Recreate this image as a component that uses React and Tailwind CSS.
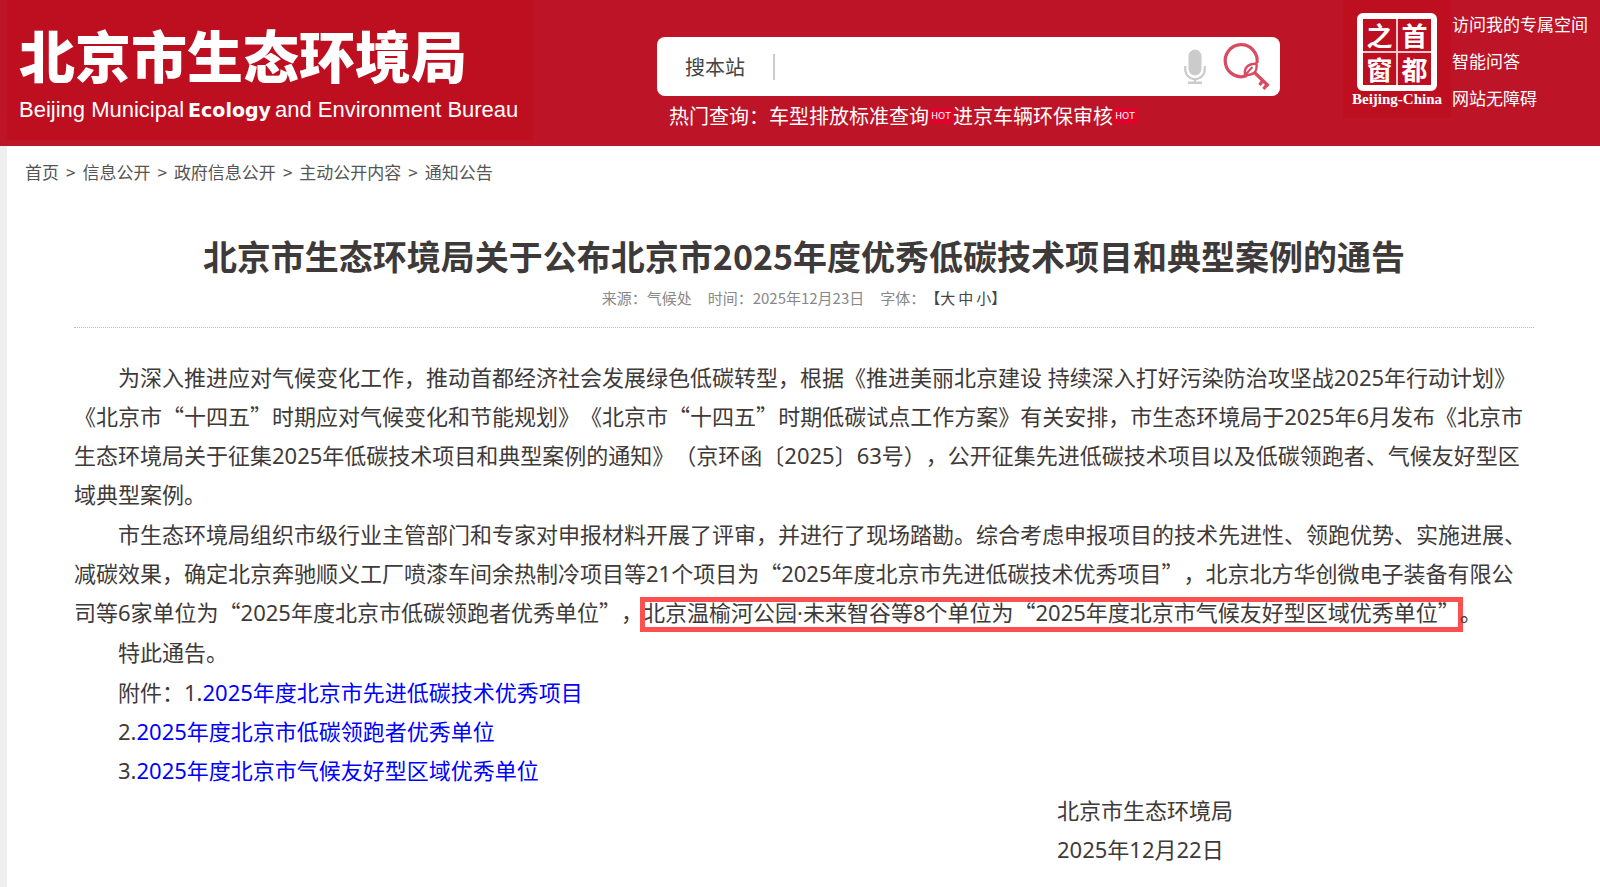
const crumbs = ["首页", "信息公开", "政府信息公开", "主动公开内容", "通知公告"];

function MicIcon() {
  return (
    <svg viewBox="0 0 22 36" className="h-9 w-[22px]" aria-hidden="true">
      <rect x="4.500" y="0.500" width="13" height="26" rx="6.500" fill="#cbcbcb" />
      <path d="M1.200 17v3c0 5.800 4.300 10 9.800 10s9.800-4.200 9.800-10v-3" fill="none" stroke="#cbcbcb" strokeWidth="2.200" />
      <path d="M11 30v3.500M4 33.800h14" stroke="#cbcbcb" strokeWidth="2.400" />
    </svg>
  );
}

function KeyIcon() {
  return (
    <svg viewBox="0 0 48 50" className="h-[50px] w-12" aria-hidden="true" fill="none" stroke="#d94b62">
      <path d="M25 33.600A16 16 0 1 1 35 21" strokeWidth="3.200" />
      <path d="M23 33c-1-7 2-11 11.500-11.500C35.500 30 31.500 33.500 23 33z" strokeWidth="2.400" />
      <path d="M24 32l6.500-7" strokeWidth="2" />
      <path d="M32.500 30.500l14 13.500" strokeWidth="3.200" />
      <path d="M41 38.500l-3.500 4.500M45.500 42l-4 5" strokeWidth="3.200" />
    </svg>
  );
}

function Hot() {
  return (
    <span className="flex h-4 w-6 items-center justify-center bg-[#e0022a] font-['DejaVu_Sans',sans-serif] text-[9px] leading-4 text-white">
      HOT
    </span>
  );
}

function SealGlyph({ children }) {
  return <span className="flex items-center justify-center leading-[26px]">{children}</span>;
}

function Seal() {
  return (
    <a href="#capital" className="flex w-[108px] shrink-0 flex-col items-center bg-[#be0f20] pt-[13px] pb-[11px] text-white">
      <span className="grid h-[78px] w-20 grid-cols-2 grid-rows-2 gap-[2px] rounded-md border-[6px] border-white bg-[linear-gradient(#f3c9cd,#f3c9cd),linear-gradient(#f3c9cd,#f3c9cd)] bg-[length:2px_100%,100%_2px] bg-center bg-no-repeat font-['Noto_Sans_CJK_SC',sans-serif] text-[26px] font-bold">
        <SealGlyph>之</SealGlyph>
        <SealGlyph>首</SealGlyph>
        <SealGlyph>窗</SealGlyph>
        <SealGlyph>都</SealGlyph>
      </span>
      <span className="mt-px font-['Liberation_Serif',serif] text-[15px] leading-[15px] font-bold">Beijing-China</span>
    </a>
  );
}

function Header() {
  return (
    <header className="flex h-[146px] items-start bg-[#be1428] pl-[7px] text-white">
      <a href="#home" className="flex h-[140px] w-[526px] shrink-0 flex-col bg-[#be0f20] pl-3">
        <span className="mt-[18px] text-[56px] leading-[72px] font-black whitespace-nowrap">北京市生态环境局</span>
        <span className="mt-[6px] flex items-baseline gap-1 font-['Liberation_Sans',sans-serif] text-[22px] leading-7 whitespace-nowrap">
          <span>Beijing Municipal</span>
          <b className="font-['DejaVu_Sans',sans-serif] text-[19px]">Ecology</b>
          <span>and Environment Bureau</span>
        </span>
      </a>
      <div className="ml-[124px] w-[623px] pt-[37px]">
        <form className="flex h-[59px] items-center rounded-lg bg-white pr-[10px] pl-7" onSubmit={(e) => e.preventDefault()}>
          <label htmlFor="q" className="shrink-0 pr-7 text-[20px] text-[#444]">搜本站</label>
          <input id="q" className="h-[26px] min-w-0 flex-1 border-l-2 border-[#ccc] pl-3 text-[18px] text-[#444] outline-none" />
          <button type="button" aria-label="语音输入"><MicIcon /></button>
          <button type="submit" aria-label="搜索" className="ml-4"><KeyIcon /></button>
        </form>
        <p className="flex items-center pl-3 text-[20px] leading-10 whitespace-nowrap">
          <span>热门查询：</span>
          <a href="#emission">车型排放标准查询</a>
          <Hot />
          <a href="#audit">进京车辆环保审核</a>
          <Hot />
        </p>
      </div>
      <div className="ml-auto flex">
        <Seal />
        <nav className="flex w-[149px] flex-col gap-[11px] pt-[11px] pl-px text-[17px] leading-[26px] whitespace-nowrap">
          <a href="#space">访问我的专属空间</a>
          <a href="#ask">智能问答</a>
          <a href="#access">网站无障碍</a>
        </nav>
      </div>
    </header>
  );
}

// Quotation marks take the full-width CJK form while digits use the Latin face.
function Zh({ children }) {
  return children.split(/([“”])/).map((part, i) =>
    i % 2 ? <span key={i} className="font-['Noto_Sans_CJK_SC',sans-serif] leading-none">{part}</span> : part
  );
}

export default function App() {
  return (
    <div lang="zh-CN" className="min-h-screen bg-white font-['Noto_Sans_CJK_SC',sans-serif] [text-spacing-trim:space-all]">
      <Header />
      <div className="min-h-[741px] border-l-[7px] border-[#efefef]">
        <nav className="flex gap-[7px] pt-3 pl-[18px] text-[17px] leading-7 text-[#555]">
          {crumbs.map((c, i) => (
            <span key={c} className="flex gap-[7px]">
              {i > 0 && <span>&gt;</span>}
              <a href="#crumb">{c}</a>
            </span>
          ))}
        </nav>
        <main className="mr-[66px] ml-[67px] text-[#3e3a39]">
          <h1 className="mt-[43px] text-center text-[34px] leading-[53px] font-bold">
            北京市生态环境局关于公布北京市2025年度优秀低碳技术项目和典型案例的通告
          </h1>
          <div className="flex justify-center gap-4 border-b border-dotted border-[#bbb] pt-1 pb-[17px] text-[15px] leading-6 text-[#888]">
            <span>来源：气候处</span>
            <span>时间：2025年12月23日</span>
            <span className="flex">
              字体：
              <span className="flex gap-[3px] text-[#444]">
                <button type="button">【大</button>
                <button type="button">中</button>
                <button type="button">小】</button>
              </span>
            </span>
          </div>
          <article className="space-y-px pt-[30px] font-['Noto_Sans','Noto_Sans_CJK_SC',sans-serif] text-[22px] leading-[39px]">
            <p className="indent-11">
              <Zh>为深入推进应对气候变化工作，推动首都经济社会发展绿色低碳转型，根据《推进美丽北京建设 持续深入打好污染防治攻坚战2025年行动计划》《北京市“十四五”时期应对气候变化和节能规划》《北京市“十四五”时期低碳试点工作方案》有关安排，市生态环境局于2025年6月发布《北京市生态环境局关于征集2025年低碳技术项目和典型案例的通知》（京环函〔2025〕63号），公开征集先进低碳技术项目以及低碳领跑者、气候友好型区域典型案例。</Zh>
            </p>
            <p className="indent-11">
              <Zh>市生态环境局组织市级行业主管部门和专家对申报材料开展了评审，并进行了现场踏勘。综合考虑申报项目的技术先进性、领跑优势、实施进展、减碳效果，确定北京奔驰顺义工厂喷漆车间余热制冷项目等21个项目为“2025年度北京市先进低碳技术优秀项目”，北京北方华创微电子装备有限公司等6家单位为“2025年度北京市低碳领跑者优秀单位”，</Zh>
              <mark className="inline-block bg-transparent pb-1 indent-0 leading-[25px] text-inherit outline-[5px] -outline-offset-2 outline-[#fb5050]"><Zh>北京温榆河公园·未来智谷等8个单位为“2025年度北京市气候友好型区域优秀单位”</Zh></mark>。
            </p>
            <p className="indent-11">特此通告。</p>
            <div className="pl-11">
              <p>附件：1.<a href="#a1" className="text-[#0000ff]">2025年度北京市先进低碳技术优秀项目</a></p>
              <p>2.<a href="#a2" className="text-[#0000ff]">2025年度北京市低碳领跑者优秀单位</a></p>
              <p>3.<a href="#a3" className="text-[#0000ff]">2025年度北京市气候友好型区域优秀单位</a></p>
            </div>
            <div className="ml-auto w-[477px]">
              <p>北京市生态环境局</p>
              <p>2025年12月22日</p>
            </div>
          </article>
        </main>
      </div>
    </div>
  );
}
